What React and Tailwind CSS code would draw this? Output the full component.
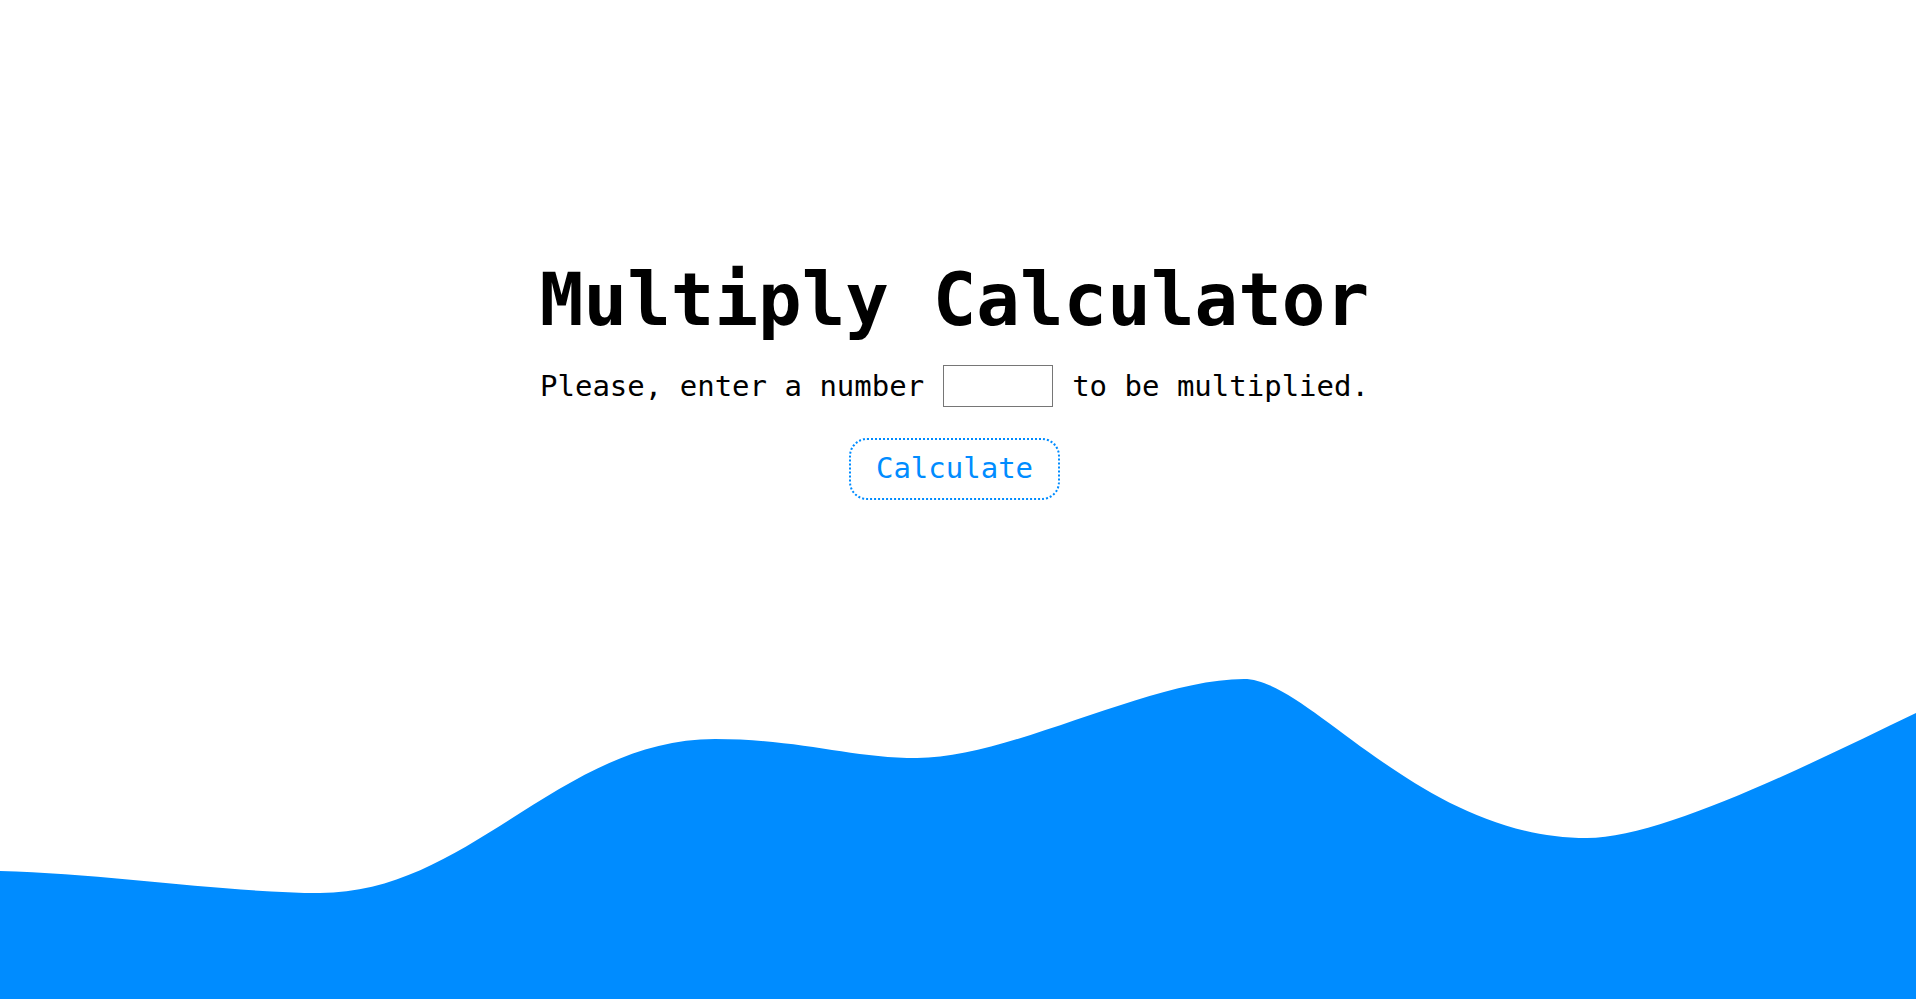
import React from "react";

const Wave = () => (
  <svg
    className="block w-full h-[330px] shrink-0"
    viewBox="0 0 1916 330"
    preserveAspectRatio="none"
  >
    <path
      fill="#008cff"
      d="M0,202 C110,205 230,224 320,224 C470,224 560,70 715,70 C800,70 850,89 917,89 C1010,89 1150,10 1244,10 C1310,10 1420,169 1587,169 C1660,169 1800,100 1916,44 L1916,330 L0,330 Z"
    />
  </svg>
);

const App = () => {
  return (
    <div className="h-screen flex flex-col overflow-hidden bg-white font-['DejaVu_Sans_Mono',monospace]">
      <div className="flex-1 flex flex-col items-center pt-[264px] pr-[7px]">
        <h1 className="text-[72.5px] leading-none font-bold text-black">
          Multiply Calculator
        </h1>
        <div className="mt-[28px] flex items-center text-[29px] text-black">
          <span>Please, enter a number</span>
          <input
            type="text"
            className="mx-[19px] w-[110px] h-[42px] border border-[#767676] bg-white outline-none px-2"
          />
          <span>to be multiplied.</span>
        </div>
        <button className="mt-[30px] h-[62px] px-[25px] rounded-[18px] border-2 border-dotted border-[#008cff] bg-white text-[29px] text-[#008cff]">
          Calculate
        </button>
      </div>
      <Wave />
    </div>
  );
};

export default App;
